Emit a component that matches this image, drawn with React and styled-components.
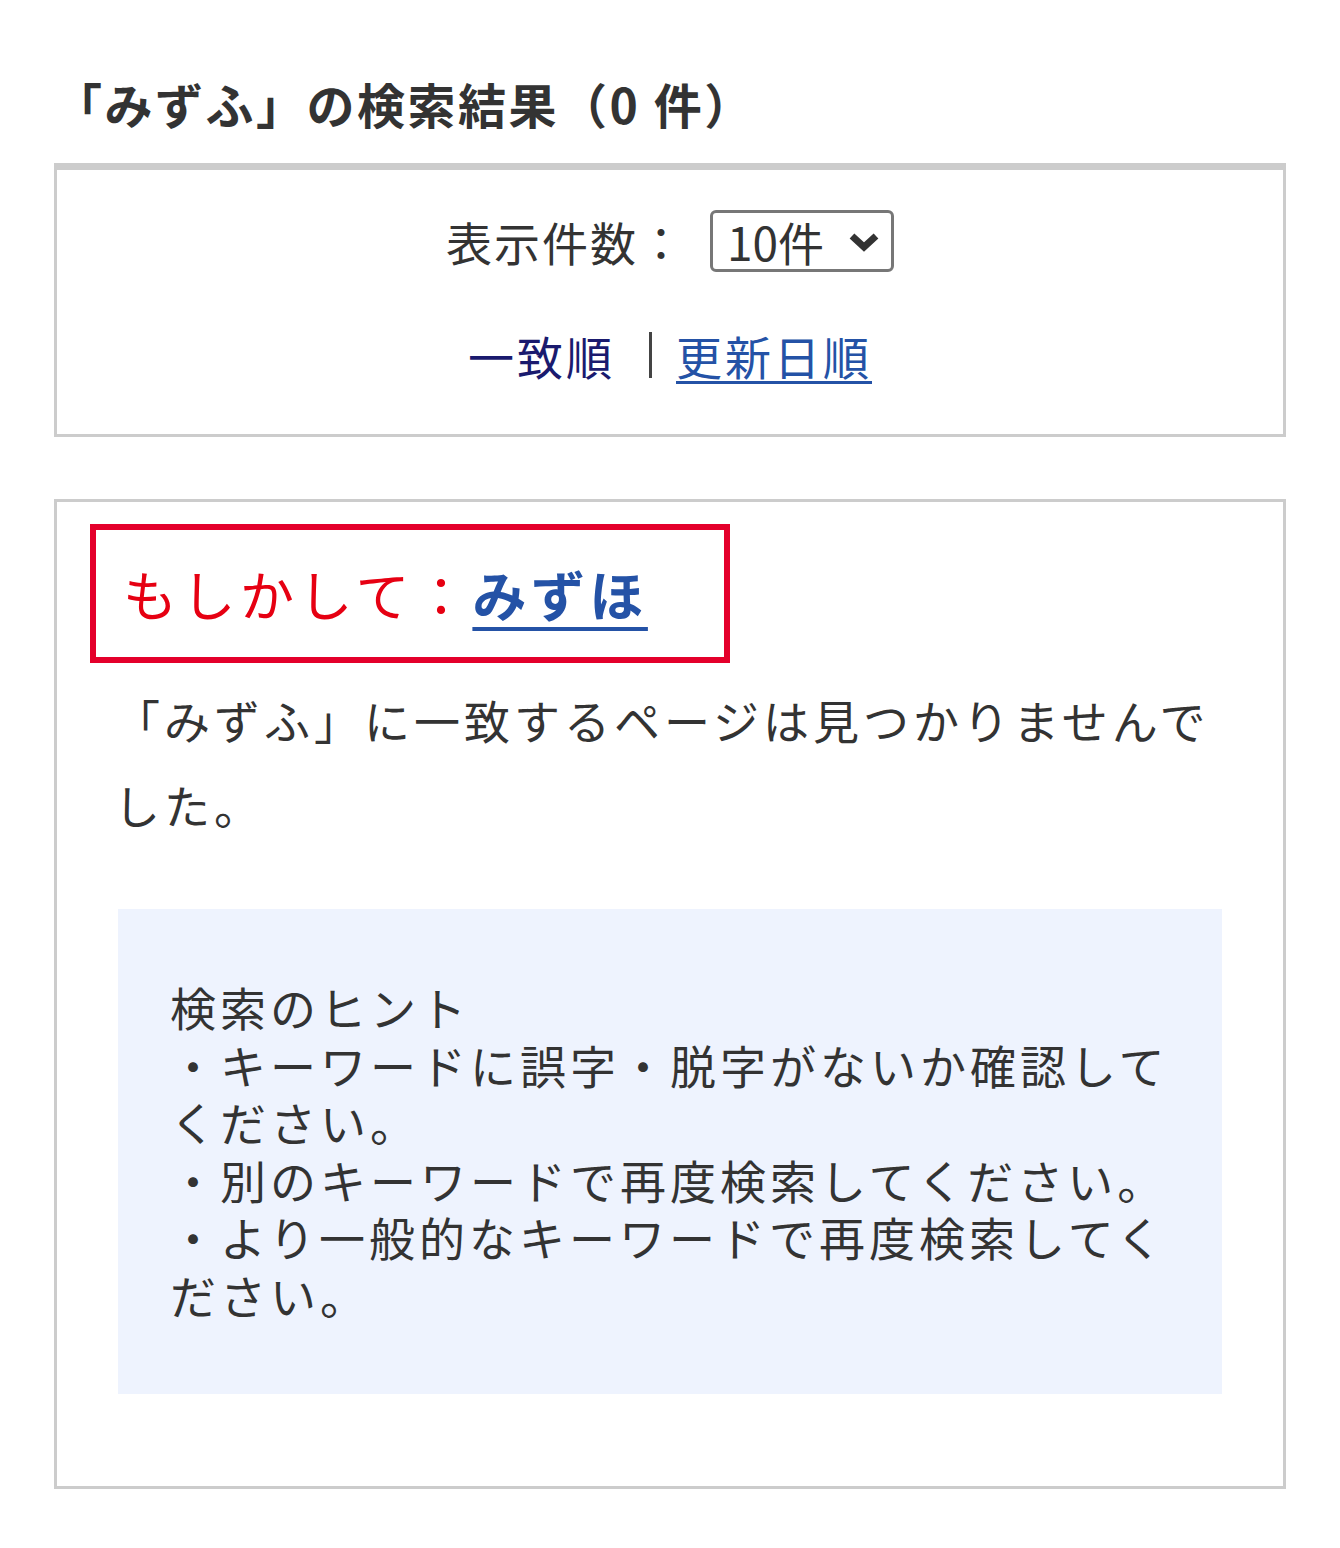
import React from "react";
import styled, { createGlobalStyle } from "styled-components";

const GlobalStyle = createGlobalStyle`
  body {
    margin: 0;
    background: #fff;
    font-family: "Noto Sans CJK JP", "Noto Sans", sans-serif;
    color: #333;
  }
`;

const Page = styled.div`
  padding: 68px 54px 60px;
`;

const Title = styled.h1`
  margin: 0 0 25px;
  font-size: 48px;
  line-height: 70px;
  font-weight: 700;
  color: #333;
  letter-spacing: 2.5px;
`;

const SortBox = styled.div`
  border: 3px solid #ccc;
  border-top-width: 7px;
  height: 274px;
  box-sizing: border-box;
  display: flex;
  flex-direction: column;
  align-items: center;
  padding-top: 40px;
  gap: 52px;
`;

const Row = styled.div`
  display: flex;
  align-items: center;
  font-size: 46px;
  line-height: 62px;
  color: #333;
`;

const Label = styled.span`
  letter-spacing: 2px;
  margin-right: 24px;
`;

const SelectWrap = styled.div`
  position: relative;
  width: 184px;
  height: 62px;
`;

const Select = styled.select`
  appearance: none;
  width: 100%;
  height: 100%;
  box-sizing: border-box;
  border: 3px solid #777;
  border-radius: 6px;
  background: #fff;
  font-family: inherit;
  font-size: 46px;
  color: #333;
  padding: 0 0 0 14px;
  line-height: 56px;
`;

const Chevron = styled.svg`
  position: absolute;
  right: 14px;
  top: 22px;
  pointer-events: none;
`;

const SortLinks = styled.div`
  display: flex;
  align-items: center;
  font-size: 46px;
  line-height: 62px;
  letter-spacing: 3px;
`;

const Current = styled.span`
  color: #1a1a6e;
`;

const Divider = styled.span`
  display: inline-block;
  width: 3px;
  height: 46px;
  background: #444;
  margin: 0 24px 0 34px;
`;

const SortLink = styled.a`
  color: #2452a6;
  text-decoration: underline;
  text-decoration-thickness: 3px;
  text-underline-offset: 6px;
  cursor: pointer;
`;

const ResultBox = styled.div`
  margin-top: 62px;
  border: 3px solid #ccc;
  padding: 22px 33px 92px;
`;

const Suggest = styled.div`
  width: 640px;
  height: 139px;
  box-sizing: border-box;
  border: 6px solid #e4002b;
  padding-left: 27px;
  font-size: 54px;
  line-height: 127px;
  letter-spacing: 4.5px;
  color: #e60012;
  white-space: nowrap;
`;

const SuggestLink = styled.a`
  color: #2452a6;
  font-weight: 700;
  text-decoration: underline;
  text-decoration-thickness: 4px;
  text-underline-offset: 10px;
  cursor: pointer;
`;

const Message = styled.p`
  margin: 14px 0 0;
  padding: 0 24px;
  font-size: 46px;
  line-height: 85px;
  letter-spacing: 4px;
  color: #333;
`;

const Hint = styled.div`
  margin: 62px 28px 0;
  background: #eef3fe;
  padding: 69px 46px 71px 52px;
  font-size: 46px;
  line-height: 57.5px;
  letter-spacing: 4px;
  color: #333;
`;

const hints = [
  "検索のヒント",
  "・キーワードに誤字・脱字がないか確認してください。",
  "・別のキーワードで再度検索してください。",
  "・より一般的なキーワードで再度検索してください。",
];

export default function App() {
  return (
    <>
      <GlobalStyle />
      <Page>
        <Title>「みずふ」の検索結果（0 件）</Title>
        <SortBox>
          <Row>
            <Label>表示件数：</Label>
            <SelectWrap>
              <Select defaultValue="10">
                <option value="10">10件</option>
                <option value="20">20件</option>
                <option value="50">50件</option>
              </Select>
              <Chevron width="32" height="20" viewBox="0 0 32 20">
                <path d="M4 4 L16 15 L28 4" fill="none" stroke="#333" strokeWidth="7" />
              </Chevron>
            </SelectWrap>
          </Row>
          <SortLinks>
            <Current>一致順</Current>
            <Divider />
            <SortLink>更新日順</SortLink>
          </SortLinks>
        </SortBox>

        <ResultBox>
          <Suggest>
            もしかして：<SuggestLink>みずほ</SuggestLink>
          </Suggest>
          <Message>「みずふ」に一致するページは見つかりませんでした。</Message>
          <Hint>
            {hints.map((h) => (
              <div key={h}>{h}</div>
            ))}
          </Hint>
        </ResultBox>
      </Page>
    </>
  );
}
